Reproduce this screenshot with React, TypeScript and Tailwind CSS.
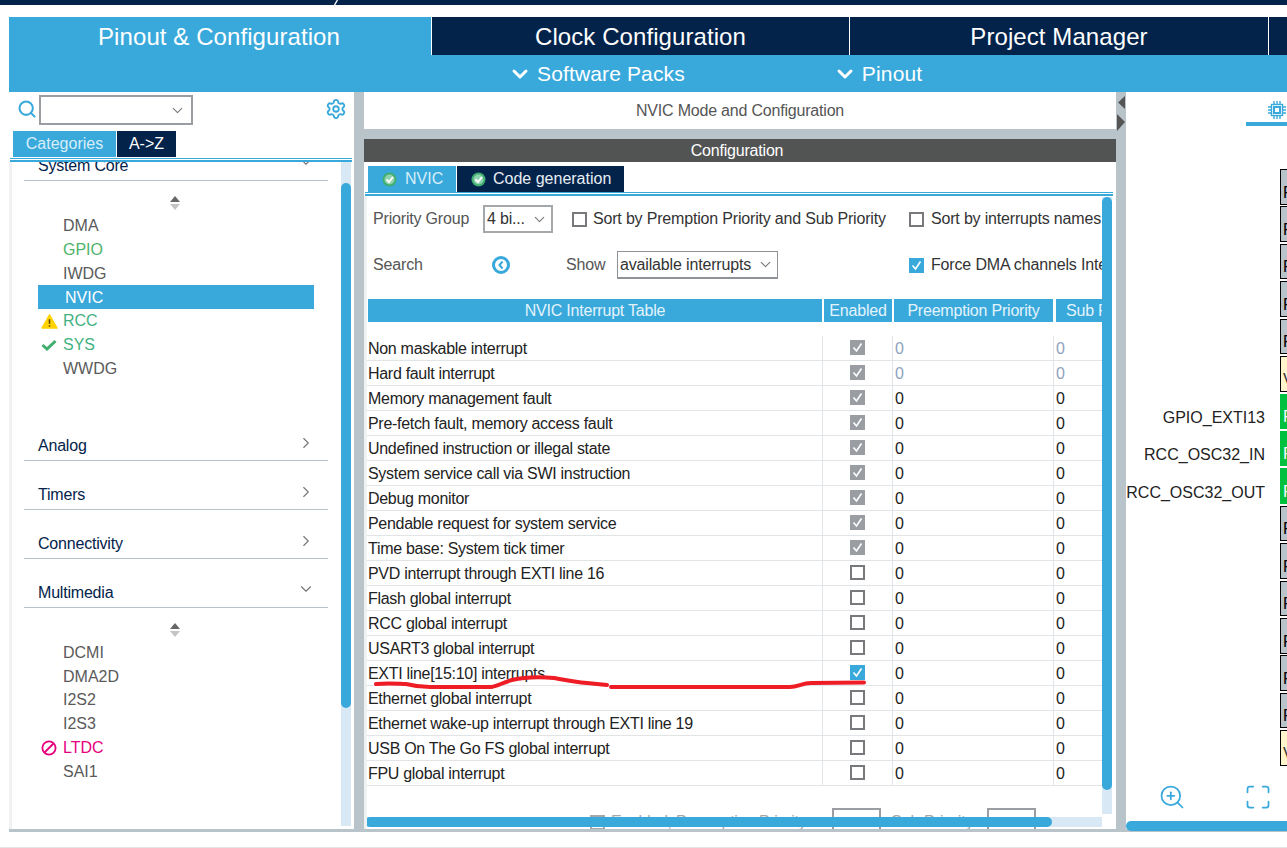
import { ChevronDown, ChevronRight, Maximize, Search, Settings, ZoomIn } from "lucide-react";

const ROWS = [
  { name: "Non maskable interrupt", state: "locked", muted: true },
  { name: "Hard fault interrupt", state: "locked", muted: true },
  { name: "Memory management fault", state: "locked" },
  { name: "Pre-fetch fault, memory access fault", state: "locked" },
  { name: "Undefined instruction or illegal state", state: "locked" },
  { name: "System service call via SWI instruction", state: "locked" },
  { name: "Debug monitor", state: "locked" },
  { name: "Pendable request for system service", state: "locked" },
  { name: "Time base: System tick timer", state: "locked" },
  { name: "PVD interrupt through EXTI line 16", state: "off" },
  { name: "Flash global interrupt", state: "off" },
  { name: "RCC global interrupt", state: "off" },
  { name: "USART3 global interrupt", state: "off" },
  { name: "EXTI line[15:10] interrupts", state: "on" },
  { name: "Ethernet global interrupt", state: "off" },
  { name: "Ethernet wake-up interrupt through EXTI line 19", state: "off" },
  { name: "USB On The Go FS global interrupt", state: "off" },
  { name: "FPU global interrupt", state: "off" },
];

const PINS = ["g", "g", "g", "g", "g", "y", "x", "x", "x", "g", "g", "g", "g", "g", "g", "y"];

function Check({ state }: { state: string }) {
  if (state === "off") {
    return <span className="block h-[15px] w-[15px] border-2 border-[#77797c] bg-white" />;
  }
  return (
    <span className={`flex h-[15px] w-[15px] items-center justify-center ${state === "locked" ? "bg-[#9a9ea2]" : "bg-[#39a9dc]"}`}>
      <svg viewBox="0 0 15 15" className="h-[15px] w-[15px]" fill="none" stroke="white" strokeWidth="1.6">
        <path d="M3.5 7.5 6.5 11 11.5 3.5" />
      </svg>
    </span>
  );
}

function OkBadge() {
  return (
    <svg viewBox="0 0 15 15" className="h-[15px] w-[15px] shrink-0">
      <circle cx="7.5" cy="7.5" r="7" fill="#3fae6e" />
      <circle cx="7.5" cy="7.5" r="5" fill="#8fd3ae" />
      <path d="M4.5 7.5 7 10 11 5" fill="none" stroke="white" strokeWidth="2" />
    </svg>
  );
}

function SortIcon() {
  return (
    <svg viewBox="0 0 12 14" className="h-[14px] w-[12px]">
      <path d="M6 0 11 6H1Z" fill="#666" />
      <path d="M1 8H11L6 14Z" fill="#c4c4c4" />
    </svg>
  );
}

function GroupHeader({ label, open }: { label: string; open?: boolean }) {
  return (
    <div className="ml-[15px] flex h-[49px] w-[304px] shrink-0 items-end justify-between border-b border-[#b9c4ca] pb-[2px] pl-[14px] pr-[13px]">
      <span className="text-[16px] leading-[24px] tracking-[-0.2px] text-[#03234b]">{label}</span>
      {open ? (
        <ChevronDown className="mb-[7px] h-[18px] w-[18px] text-[#777]" strokeWidth={1.5} />
      ) : (
        <ChevronRight className="mb-[6px] h-[18px] w-[18px] text-[#777]" strokeWidth={1.5} />
      )}
    </div>
  );
}

function TreeItem({ label, color = "text-[#5a5a5a]", icon }: { label: string; color?: string; icon?: React.ReactNode }) {
  return (
    <div className={`relative ml-[29px] flex h-[23.8px] items-center pl-[25px] text-[16px] ${color}`}>
      {icon && <span className="absolute left-[2px] top-[3px] flex h-[18px] w-[18px] items-center justify-center">{icon}</span>}
      {label}
    </div>
  );
}

export default function App() {
  return (
    <div className="relative flex h-[848px] w-[1287px] flex-col overflow-hidden bg-white font-['Liberation_Sans',Arial,sans-serif]">
      {/* Top bar */}
      <div className="relative h-[5px] shrink-0 bg-[#03234b]">
        <svg viewBox="0 0 8 5" className="absolute left-[331px] top-0 h-[5px] w-[8px]">
          <path d="M6.5 0 3.5 5" stroke="white" strokeWidth="1.4" />
        </svg>
      </div>

      {/* Main tabs */}
      <div className="ml-[9px] mt-[12px] flex h-[38px] shrink-0 text-[24px] tracking-[0.08px] text-white">
        <div className="flex w-[422px] items-center justify-center bg-[#39a9dc] pr-[2px] pt-[2px]">Pinout &amp; Configuration</div>
        <div className="flex w-[418px] items-center justify-center border-l border-white bg-[#03234b] pt-[2px]">Clock Configuration</div>
        <div className="flex w-[419px] items-center justify-center border-l border-white bg-[#03234b] pt-[2px]">Project Manager</div>
        <div className="flex-1 border-l border-white bg-[#03234b]" />
      </div>

      {/* Sub menu */}
      <div className="ml-[9px] flex h-[37px] shrink-0 items-center bg-[#39a9dc] pl-[499px] text-[21px] tracking-[0.14px] text-white">
        <ChevronDown className="h-[24px] w-[24px]" strokeWidth={3} />
        <span className="ml-[5px]">Software Packs</span>
        <ChevronDown className="ml-[148px] h-[24px] w-[24px]" strokeWidth={3} />
        <span className="ml-[5px]">Pinout</span>
      </div>

      <div className="ml-[9px] flex h-[740px] shrink-0 border-b-[3px] border-[#b9c4ca]">
        {/* Left panel */}
        <div className="flex w-[345px] shrink-0 flex-col">
          <div className="flex h-[39px] shrink-0 items-start pl-[8px] pr-[7px] pt-[3px]">
            <Search className="mt-[4px] h-[20px] w-[20px] text-[#39a9dc]" strokeWidth={2.5} />
            <div className="ml-[2px] flex h-[30px] w-[154px] items-center justify-end border-2 border-[#9a9ea2] pr-[5px]">
              <ChevronDown className="h-[17px] w-[17px] text-[#777]" strokeWidth={1.5} />
            </div>
            <Settings className="ml-auto mt-[3px] h-[22px] w-[22px] text-[#39a9dc]" strokeWidth={2} />
          </div>
          <div className="ml-[4px] flex h-[26px] shrink-0 text-[16px] text-[#d7eef8]">
            <div className="flex w-[103px] items-center justify-center bg-[#39a9dc]">Categories</div>
            <div className="ml-px flex w-[59px] items-center justify-center bg-[#03234b] text-white">A-&gt;Z</div>
          </div>
          <div className="ml-px mr-[2px] mt-px h-px shrink-0 bg-[#39a9dc]" />
          <div className="ml-px mr-[2px] mt-px h-[2px] shrink-0 bg-[#39a9dc]" />

          <div className="relative min-h-0 flex-1 overflow-hidden border-l-[3px] border-[#eff1f2]">
            <div className="-ml-[3px] -mt-[30px] flex flex-col">
              <GroupHeader label="System Core" open />
              <div className="flex h-[33px] items-start justify-center pr-[13px] pt-[15px]">
                <SortIcon />
              </div>
              <TreeItem label="DMA" />
              <TreeItem label="GPIO" color="text-[#4fb36a]" />
              <TreeItem label="IWDG" />
              <div className="ml-[29px] flex h-[23.8px] w-[276px] items-center bg-[#39a9dc] pl-[27px] pt-[1px] text-[16px] text-white">NVIC</div>
              <TreeItem
                label="RCC"
                color="text-[#3fb27f]"
                icon={
                  <svg viewBox="0 0 18 16" className="h-[15px] w-[17px]">
                    <path d="M9 1 17 15H1Z" fill="#ffd200" stroke="#ffd200" strokeWidth="1.5" strokeLinejoin="round" />
                    <path d="M9 5.5V10.5M9 12V13.5" stroke="#5a4a00" strokeWidth="1.6" />
                  </svg>
                }
              />
              <TreeItem
                label="SYS"
                color="text-[#3fb27f]"
                icon={
                  <svg viewBox="0 0 16 12" className="h-[12px] w-[16px]">
                    <path d="M1.5 6 6 10 14.5 2" fill="none" stroke="#3fae6e" strokeWidth="3" />
                  </svg>
                }
              />
              <TreeItem label="WWDG" />
              <div className="h-[31.4px]" />
              <GroupHeader label="Analog" />
              <GroupHeader label="Timers" />
              <GroupHeader label="Connectivity" />
              <GroupHeader label="Multimedia" open />
              <div className="flex h-[33px] items-start justify-center pr-[13px] pt-[15px]">
                <SortIcon />
              </div>
              <TreeItem label="DCMI" />
              <TreeItem label="DMA2D" />
              <TreeItem label="I2S2" />
              <TreeItem label="I2S3" />
              <TreeItem
                label="LTDC"
                color="text-[#e6007e]"
                icon={
                  <svg viewBox="0 0 16 16" className="h-[16px] w-[16px]" fill="none" stroke="#e6007e" strokeWidth="1.8">
                    <circle cx="8" cy="8" r="6.6" />
                    <path d="M3.5 12.5 12.5 3.5" />
                  </svg>
                }
              />
              <TreeItem label="SAI1" />
            </div>
            {/* list scrollbar */}
            <div className="absolute bottom-[3px] left-[329px] top-0 w-[10px] bg-[#d8e8f5]">
              <div className="absolute left-0 top-[21px] h-[525px] w-[10px] rounded-[5px] bg-[#39a9dc]" />
            </div>
          </div>
        </div>

        <div className="w-[10px] shrink-0 bg-[#b9c4ca]" />

        {/* Center panel */}
        <div className="flex w-[752px] shrink-0 flex-col">
          <div className="flex h-[37px] shrink-0 items-center justify-center text-[16px] tracking-[-0.2px] text-[#555]">NVIC Mode and Configuration</div>
          <div className="h-[10px] shrink-0 bg-[#b9c4ca]" />
          <div className="flex h-[23px] shrink-0 items-center justify-center bg-[#525454] pr-[6px] text-[16px] tracking-[-0.2px] text-white">Configuration</div>
          <div className="ml-[4px] mt-[4px] flex h-[26px] shrink-0 text-[16px] text-[#d7eef8]">
            <div className="flex w-[88px] items-center gap-[8px] bg-[#39a9dc] pl-[14px]">
              <OkBadge />
              NVIC
            </div>
            <div className="ml-px flex w-[167px] items-center gap-[7px] bg-[#03234b] pl-[14px] text-[#e8eef3]">
              <OkBadge />
              Code generation
            </div>
          </div>
          <div className="ml-px mr-[3px] h-px shrink-0 bg-[#39a9dc]" />
          <div className="ml-px mr-[3px] mt-px h-[2px] shrink-0 bg-[#39a9dc]" />

          <div className="relative min-h-0 flex-1 overflow-hidden border-l-[3px] border-[#eff1f2]">
            <div className="w-[735px] overflow-hidden">
              {/* Options */}
              <div className="flex h-[44px] items-center whitespace-nowrap pl-[6px] pt-[2px] text-[16px] tracking-[-0.18px] text-[#333]">
                <span className="w-[110px] shrink-0 text-[#555]">Priority Group</span>
                <div className="flex h-[28px] w-[70px] shrink-0 items-center justify-between border-2 border-[#a5a8ab] pl-[2px] pr-[3px]">
                  <span>4 bi...</span>
                  <ChevronDown className="h-[17px] w-[17px] text-[#777]" strokeWidth={1.5} />
                </div>
                <span className="ml-[19px] shrink-0"><Check state="off" /></span>
                <span className="ml-[6px] w-[316px] shrink-0">Sort by Premption Priority and Sub Priority</span>
                <span className="shrink-0"><Check state="off" /></span>
                <span className="ml-[7px] shrink-0">Sort by interrupts names</span>
              </div>
              <div className="flex h-[48px] items-center whitespace-nowrap pl-[6px] pt-[2px] text-[16px] tracking-[-0.16px] text-[#333]">
                <span className="w-[119px] shrink-0 text-[#555]">Search</span>
                <svg viewBox="0 0 18 18" className="h-[18px] w-[18px] shrink-0">
                  <circle cx="9" cy="9" r="7.5" fill="none" stroke="#39a9dc" strokeWidth="3" />
                  <path d="M10.5 5.5 7.5 9 10.5 12.5" fill="none" stroke="#39a9dc" strokeWidth="2" />
                </svg>
                <span className="ml-[56px] w-[51px] shrink-0 text-[#555]">Show</span>
                <div className="flex h-[28px] w-[161px] shrink-0 items-center justify-between border border-b-2 border-[#8f9296] pl-[2px] pr-[3px]">
                  <span>available interrupts</span>
                  <ChevronDown className="h-[17px] w-[17px] text-[#777]" strokeWidth={1.5} />
                </div>
                <span className="ml-[131px] shrink-0"><Check state="on" /></span>
                <span className="ml-[7px] shrink-0">Force DMA channels Interrupts</span>
              </div>

              {/* Table header */}
              <div className="mt-[11px] flex h-[23px] whitespace-nowrap pl-px text-[16px] tracking-[-0.2px] text-[#e3f3fb]">
                <div className="flex w-[454px] shrink-0 items-center justify-center bg-[#39a9dc]">NVIC Interrupt Table</div>
                <div className="ml-[2px] flex w-[68px] shrink-0 items-center justify-center bg-[#39a9dc]">Enabled</div>
                <div className="ml-[2px] flex w-[159px] shrink-0 items-center justify-center bg-[#39a9dc]">Preemption Priority</div>
                <div className="ml-[3px] w-[60px] shrink-0 bg-[#39a9dc] pl-[10px] leading-[23px]">Sub Priority</div>
              </div>

              {/* Table rows */}
              <div className="mt-[14px]">
                {ROWS.map((row) => (
                  <div key={row.name} className="flex h-[25px] items-stretch border-b border-[#e2e5e8] text-[16px] text-[#222]">
                    <div className="flex w-[455px] shrink-0 items-center whitespace-nowrap pl-px pt-[2px] tracking-[-0.3px]">{row.name}</div>
                    <div className="flex w-[70px] shrink-0 items-center justify-center border-l border-[#e2e5e8] pb-[2px]">
                      <Check state={row.state} />
                    </div>
                    <div className={`flex w-[161px] shrink-0 items-center border-l border-[#e2e5e8] pl-[2px] pt-[2px] ${row.muted ? "text-[#8ea3bd]" : ""}`}>0</div>
                    <div className={`flex flex-1 items-center border-l border-[#e2e5e8] pl-[2px] pt-[2px] ${row.muted ? "text-[#8ea3bd]" : ""}`}>0</div>
                  </div>
                ))}
              </div>

              {/* Row hidden under the scrollbar */}
              <div className="mt-[22px] flex h-[28px] items-start whitespace-nowrap pl-[223px] text-[16px] leading-[24px] text-[#a5a8ab]">
                <span className="mt-[7px] h-[15px] w-[15px] shrink-0 border-2 border-[#a5a8ab]" />
                <span className="ml-[6px] mt-[2px] w-[221px] shrink-0 tracking-[-0.3px]">Enabled, Preemption Priority</span>
                <span className="h-[28px] w-[49px] shrink-0 border-2 border-[#9a9ea2]" />
                <span className="ml-[10px] mt-[2px] w-[96px] shrink-0">Sub Priority</span>
                <span className="h-[28px] w-[49px] shrink-0 border-2 border-[#9a9ea2]" />
              </div>
            </div>

            {/* vertical scrollbar */}
            <div className="absolute bottom-[15px] right-[4px] top-px w-[10px] bg-[#d8e8f5]">
              <div className="h-[593px] w-[10px] rounded-[5px] bg-[#39a9dc]" />
            </div>
            {/* horizontal scrollbar */}
            <div className="absolute -left-[2px] bottom-[2px] right-[14px] h-[10px] bg-[#d8e8f5]">
              <div className="h-[10px] w-[687px] rounded-[5px] bg-[#39a9dc]" />
            </div>
          </div>
        </div>

        <div className="relative w-[10px] shrink-0 bg-[#b9c4ca]">
          <svg viewBox="0 0 9 36" className="absolute left-px top-[4px] h-[36px] w-[9px]">
            <path d="M8 0V13L1 6.5Z" fill="#555" />
            <path d="M0 18 8 26 0 35Z" fill="#555" />
          </svg>
        </div>

        {/* Right panel */}
        <div className="relative min-w-0 flex-1">
          <div className="absolute left-[120px] top-0 h-[34px] w-[41px] border-b-[4px] border-[#39a9dc] pl-[22px] pt-[9px]">
            <svg viewBox="0 0 18 18" className="h-[18px] w-[18px]" fill="none" stroke="#39a9dc" strokeWidth="1.4">
              <rect x="3.5" y="3.5" width="11" height="11" />
              <rect x="6" y="6" width="6" height="6" strokeWidth="2" />
              <path d="M6 0V3M9 0V3M12 0V3M6 15V18M9 15V18M12 15V18M0 6H3M0 9H3M0 12H3M15 6H18M15 9H18M15 12H18" />
            </svg>
          </div>

          <div className="absolute right-[22px] top-[314px] text-[16px] leading-[24px] text-[#222]">GPIO_EXTI13</div>
          <div className="absolute right-[22px] top-[351px] text-[16px] leading-[24px] text-[#222]">RCC_OSC32_IN</div>
          <div className="absolute right-[22px] top-[389px] text-[16px] leading-[24px] text-[#222]">RCC_OSC32_OUT</div>

          {/* Chip pins, cut off by the viewport */}
          <div className="absolute left-[154px] top-[77px] flex h-[597px] w-[30px] flex-col justify-between overflow-hidden">
            {PINS.map((kind, i) => (
              <div
                key={i}
                className={`flex h-[35.5px] shrink-0 items-end border pb-[2px] pl-[2px] text-[16px] leading-[18px] ${
                  kind === "g"
                    ? "border-black bg-[#b9c4ca] text-black"
                    : kind === "y"
                      ? "border-black bg-[#fff5cc] text-[#333]"
                      : "border-[#00c040] bg-[#00c040] text-white"
                }`}
              >
                {kind === "y" ? "VDD" : "PF0"}
              </div>
            ))}
          </div>

          <ZoomIn className="absolute left-[32px] top-[691px] h-[28px] w-[28px] text-[#39a9dc]" strokeWidth={1.5} />
          <Maximize className="absolute left-[118px] top-[691px] h-[28px] w-[28px] text-[#39a9dc]" strokeWidth={1.5} />

          <div className="absolute -bottom-[2px] left-0 right-0 h-[10px] rounded-l-[5px] bg-[#39a9dc]" />
        </div>
      </div>

      {/* Status line */}
      <div className="mt-[15px] h-px shrink-0 bg-[#e2e5e8]" />

      {/* Hand-drawn red underline */}
      <svg viewBox="0 0 1287 848" className="pointer-events-none absolute left-0 top-0 h-[848px] w-[1287px]" fill="none" stroke="#ee1c25" strokeWidth="4" strokeLinecap="round">
        <path d="M376 684C390 683 400 684 406 684 414 686 420 687 430 687L491 687C498 686 504 682 512 680 525 677 542 677 554 678 565 680 575 682 587 683L607 685" />
        <path d="M611 687H790C798 687 802 683 811 683L864 682.5" />
      </svg>
    </div>
  );
}
